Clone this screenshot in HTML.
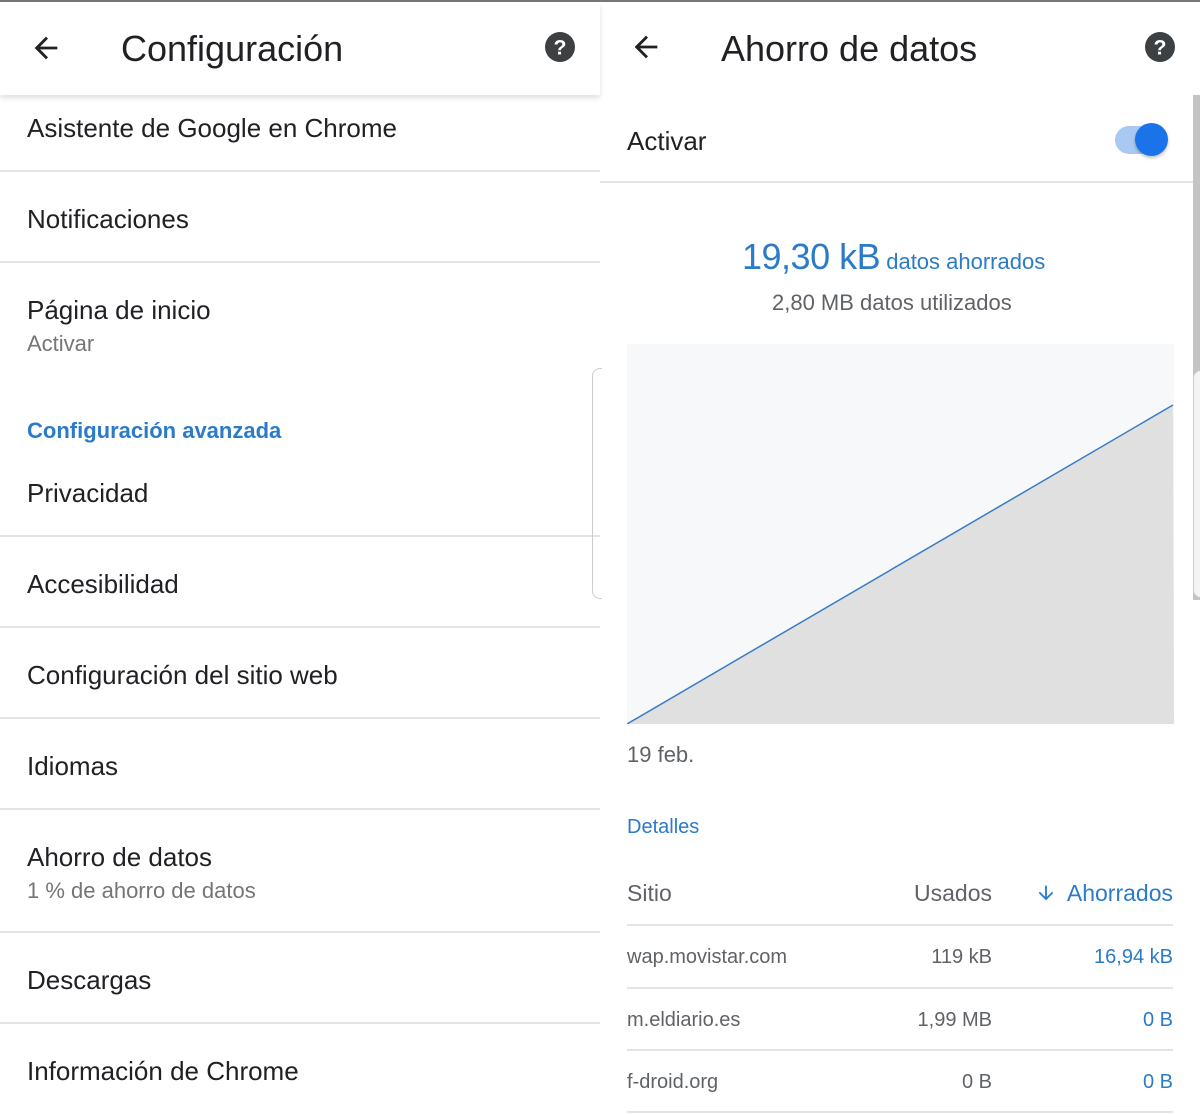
<!DOCTYPE html>
<html><head><meta charset="utf-8"><style>
*{margin:0;padding:0;box-sizing:border-box}
body{width:1200px;height:1114px;background:#fff;position:relative;overflow:hidden;font-family:"Liberation Sans",sans-serif;color:#202124}
.t{position:absolute;white-space:nowrap;line-height:1}
.l{position:absolute;height:2px;background:#e4e4e4}
.it{font-size:26px;left:27px}
.sub{font-size:22px;color:#757575;left:27px}
.r{text-align:right}
</style></head><body>
<div style="position:absolute;left:0;top:0;width:1200px;height:2px;background:#777"></div>
<div style="position:absolute;left:0;top:2px;width:600px;height:93px;background:#fff;box-shadow:0 3px 5px rgba(0,0,0,.12);z-index:2"></div>
<svg style="position:absolute;left:29px;top:31px;z-index:3" width="34" height="34" viewBox="0 0 24 24"><path d="M20 11H7.83l5.59-5.59L12 4l-8 8 8 8 1.41-1.41L7.83 13H20v-2z" fill="#202124"/></svg>
<div class="t" style="left:121px;top:31px;font-size:36px;z-index:3">Configuración</div>
<svg style="position:absolute;left:545px;top:32px;z-index:3" width="30" height="30" viewBox="0 0 24 24"><circle cx="12" cy="12" r="12" fill="#3c4043"/><text x="12" y="18" font-size="17" font-weight="bold" text-anchor="middle" fill="#fff" font-family="Liberation Sans">?</text></svg>

<div class="t it" style="top:115px">Asistente de Google en Chrome</div>
<div class="l" style="left:0;width:600px;top:170px"></div>
<div class="t it" style="top:206px">Notificaciones</div>
<div class="l" style="left:0;width:600px;top:261px"></div>
<div class="t it" style="top:297px">Página de inicio</div>
<div class="t sub" style="top:333px">Activar</div>
<div class="t" style="left:27px;top:420px;font-size:22px;color:#2b7bc9;font-weight:bold">Configuración avanzada</div>
<div class="t it" style="top:480px">Privacidad</div>
<div class="l" style="left:0;width:600px;top:535px"></div>
<div class="t it" style="top:571px">Accesibilidad</div>
<div class="l" style="left:0;width:600px;top:626px"></div>
<div class="t it" style="top:662px">Configuración del sitio web</div>
<div class="l" style="left:0;width:600px;top:717px"></div>
<div class="t it" style="top:753px">Idiomas</div>
<div class="l" style="left:0;width:600px;top:808px"></div>
<div class="t it" style="top:844px">Ahorro de datos</div>
<div class="t sub" style="top:880px">1 % de ahorro de datos</div>
<div class="l" style="left:0;width:600px;top:931px"></div>
<div class="t it" style="top:967px">Descargas</div>
<div class="l" style="left:0;width:600px;top:1022px"></div>
<div class="t it" style="top:1058px">Información de Chrome</div>
<div style="position:absolute;left:592px;top:368px;width:10px;height:231px;border:1px solid #ccc;border-right:none;border-radius:8px 0 0 8px"></div>

<svg style="position:absolute;left:629px;top:30px" width="34" height="34" viewBox="0 0 24 24"><path d="M20 11H7.83l5.59-5.59L12 4l-8 8 8 8 1.41-1.41L7.83 13H20v-2z" fill="#202124"/></svg>
<div class="t" style="left:721px;top:31px;font-size:36px">Ahorro de datos</div>
<svg style="position:absolute;left:1145px;top:32px" width="30" height="30" viewBox="0 0 24 24"><circle cx="12" cy="12" r="12" fill="#3c4043"/><text x="12" y="18" font-size="17" font-weight="bold" text-anchor="middle" fill="#fff" font-family="Liberation Sans">?</text></svg>
<div style="position:absolute;left:1193px;top:95px;width:7px;height:505px;background:#c4c4c4"></div>
<div class="t it" style="left:627px;top:128px">Activar</div>
<div style="position:absolute;left:1115px;top:126px;width:46px;height:28px;border-radius:14px;background:#a9c9f3"></div>
<div style="position:absolute;left:1135px;top:123px;width:33px;height:33px;border-radius:50%;background:#1a73e8;box-shadow:0 2px 3px rgba(0,0,0,.25)"></div>
<div class="l" style="left:600px;width:593px;top:181px"></div>
<div class="t" style="left:742px;top:239px;font-size:36px;color:#2b7bc9;letter-spacing:-0.5px">19,30 kB<span style="font-size:22px;letter-spacing:0"> datos ahorrados</span></div>
<div class="t" style="left:772px;top:292px;font-size:22px;color:#5f6368">2,80 MB datos utilizados</div>
<svg style="position:absolute;left:627px;top:344px" width="547" height="380"><rect width="547" height="380" fill="#f6f8fa"/><polygon points="0,380 546,61 547,380" fill="#e0e0e0"/><line x1="0" y1="380" x2="546" y2="61" stroke="#3a7cc4" stroke-width="1.5"/></svg>
<div class="t" style="left:627px;top:744px;font-size:22px;color:#5f6368">19 feb.</div>
<div class="t" style="left:627px;top:817px;font-size:20px;color:#2b7bc9">Detalles</div>
<div class="t" style="left:627px;top:882px;font-size:23px;color:#5f6368">Sitio</div>
<div class="t r" style="right:208px;top:882px;font-size:23px;color:#5f6368">Usados</div>
<svg style="position:absolute;left:1035px;top:882px" width="22" height="22" viewBox="0 0 24 24"><path d="M20 12l-1.41-1.41L13 16.17V4h-2v12.17l-5.58-5.59L4 12l8 8 8-8z" fill="#2b7bc9"/></svg>
<div class="t r" style="right:27px;top:882px;font-size:23px;color:#2b7bc9">Ahorrados</div>
<div class="l" style="left:627px;width:546px;top:924px"></div>
<div class="t" style="left:627px;top:947px;font-size:20px;color:#5f6368">wap.movistar.com</div>
<div class="t r" style="right:208px;top:947px;font-size:20px;color:#5f6368">119 kB</div>
<div class="t r" style="right:27px;top:947px;font-size:20px;color:#2b7bc9">16,94 kB</div>
<div class="l" style="left:627px;width:546px;top:987px"></div>
<div class="t" style="left:627px;top:1010px;font-size:20px;color:#5f6368">m.eldiario.es</div>
<div class="t r" style="right:208px;top:1010px;font-size:20px;color:#5f6368">1,99 MB</div>
<div class="t r" style="right:27px;top:1010px;font-size:20px;color:#2b7bc9">0 B</div>
<div class="l" style="left:627px;width:546px;top:1049px"></div>
<div class="t" style="left:627px;top:1072px;font-size:20px;color:#5f6368">f-droid.org</div>
<div class="t r" style="right:208px;top:1072px;font-size:20px;color:#5f6368">0 B</div>
<div class="t r" style="right:27px;top:1072px;font-size:20px;color:#2b7bc9">0 B</div>
<div class="l" style="left:627px;width:546px;top:1111px"></div>
<div style="position:absolute;left:1193px;top:370px;width:10px;height:228px;border:1px solid #ccc;border-right:none;border-radius:8px 0 0 8px;background:#f4f4f4"></div>
</body></html>
